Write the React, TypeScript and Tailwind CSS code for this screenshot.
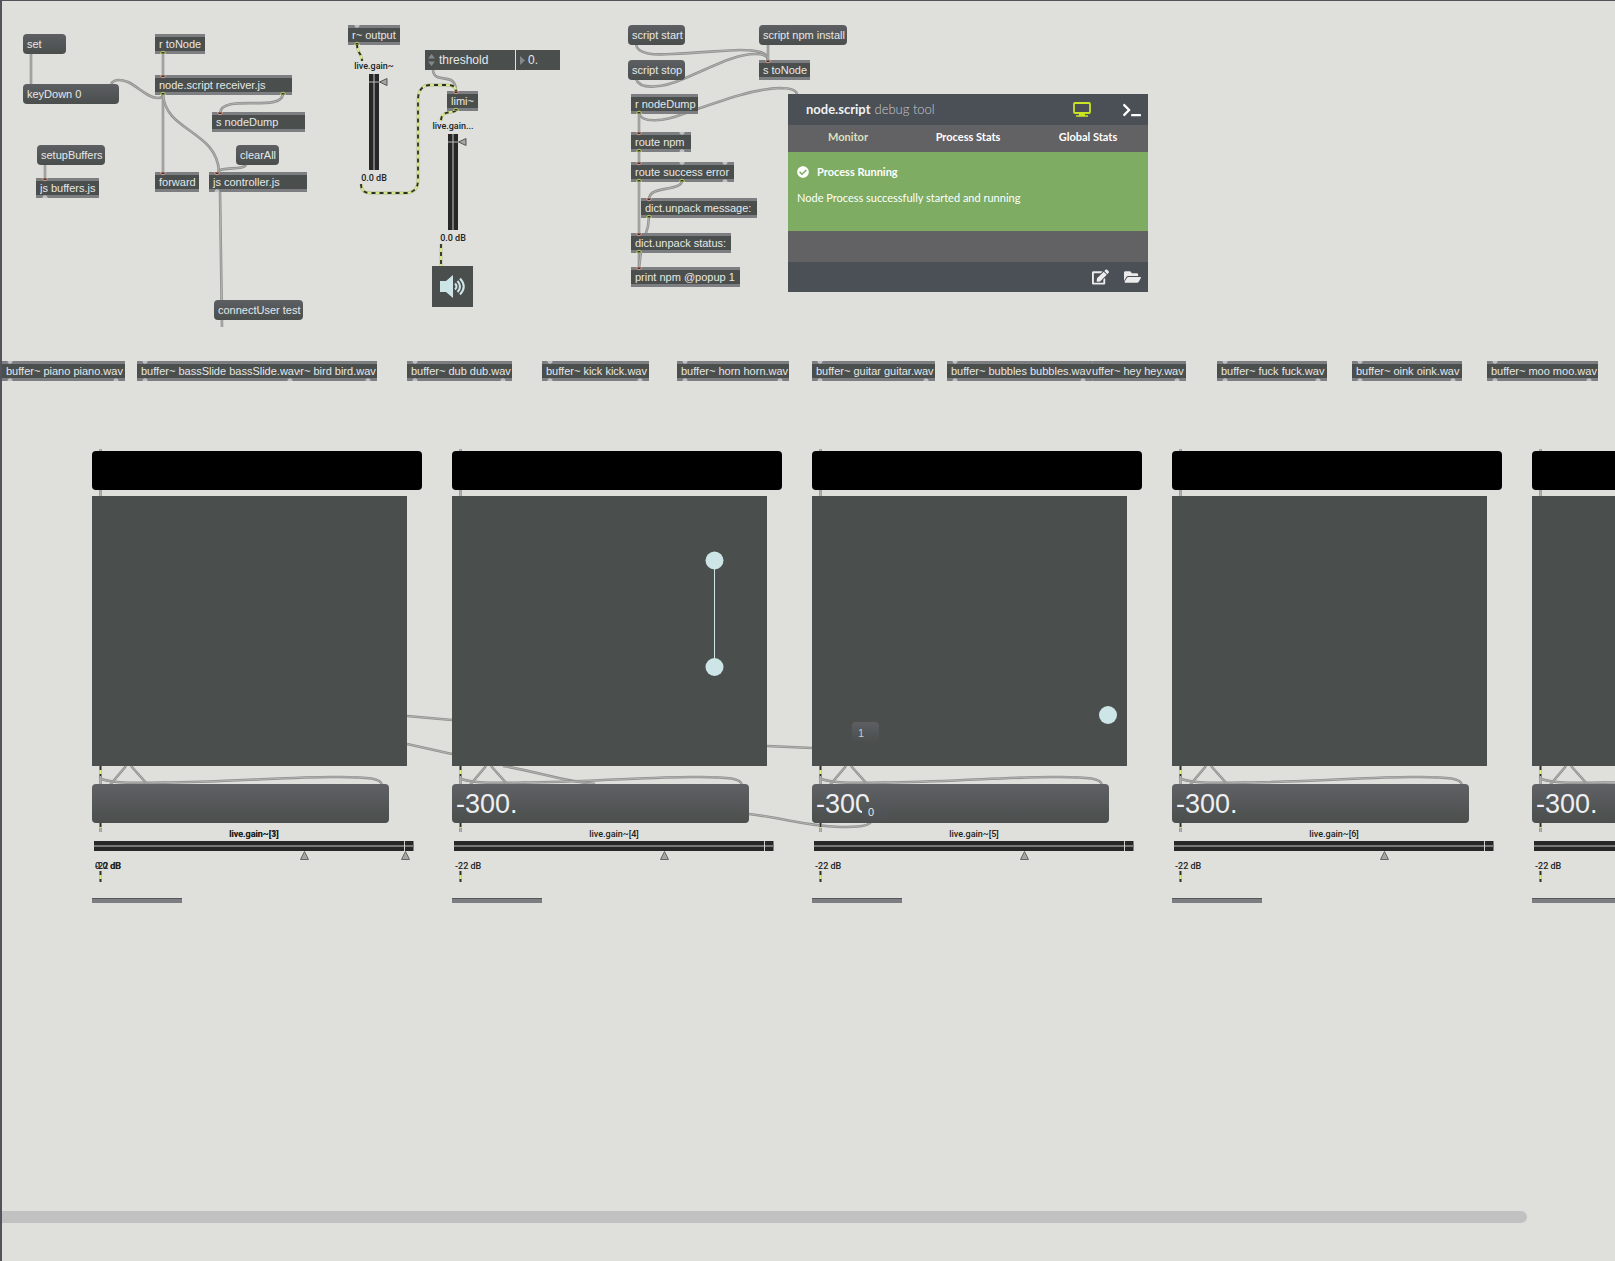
import { FaCheckCircle, FaEdit, FaFolderOpen, FaTerminal } from "react-icons/fa";

type PortKind = "in" | "out" | "idle";

interface Box {
    text: string;
    x: number;
    y: number;
    w: number;
    inlets?: [number, PortKind][];
    outlets?: [number, PortKind][];
    clip?: boolean;
}

const messages: Box[] = [
    { text: "set", x: 23, y: 34, w: 43 },
    { text: "keyDown 0", x: 23, y: 84, w: 96 },
    { text: "setupBuffers", x: 37, y: 145, w: 68 },
    { text: "clearAll", x: 236, y: 145, w: 43 },
    { text: "connectUser test", x: 214, y: 300, w: 89 },
    { text: "script start", x: 628, y: 25, w: 57 },
    { text: "script stop", x: 628, y: 60, w: 57 },
    { text: "script npm install", x: 759, y: 25, w: 88 },
];

const objects: Box[] = [
    { text: "r toNode", x: 155, y: 34, w: 50, outlets: [[8, "out"]] },
    { text: "node.script receiver.js", x: 155, y: 75, w: 137, inlets: [[8, "in"]], outlets: [[8, "out"], [128, "out"]] },
    { text: "s nodeDump", x: 212, y: 112, w: 93, inlets: [[8, "in"]] },
    { text: "js buffers.js", x: 36, y: 178, w: 63, inlets: [[9, "in"]], outlets: [[9, "idle"]], clip: true },
    { text: "forward", x: 155, y: 172, w: 44, inlets: [[8, "in"]] },
    { text: "js controller.js", x: 209, y: 172, w: 98, inlets: [[8, "in"]], outlets: [[8, "idle"]] },
    { text: "r~ output", x: 348, y: 25, w: 52, inlets: [[9, "idle"]], outlets: [[9, "out"]] },
    { text: "limi~", x: 447, y: 91, w: 31, inlets: [[9, "in"]], outlets: [[9, "out"]] },
    { text: "s toNode", x: 759, y: 60, w: 51, inlets: [[9, "in"]] },
    { text: "r nodeDump", x: 631, y: 94, w: 67, outlets: [[8, "out"]] },
    { text: "route npm", x: 631, y: 132, w: 60, inlets: [[8, "in"], [51, "idle"]], outlets: [[8, "out"], [51, "idle"]] },
    { text: "route success error", x: 631, y: 162, w: 103, inlets: [[8, "in"], [51, "idle"], [94, "idle"]], outlets: [[8, "out"], [51, "out"], [94, "idle"]] },
    { text: "dict.unpack message:", x: 641, y: 198, w: 116, inlets: [[8, "in"]], outlets: [[8, "out"]] },
    { text: "dict.unpack status:", x: 631, y: 233, w: 100, inlets: [[8, "in"]], outlets: [[8, "out"]], clip: true },
    { text: "print npm @popup 1", x: 631, y: 267, w: 109, inlets: [[8, "in"]] },
];

const cords = [
    "M31 54V84",
    "M111 84C114 79 120 79 128 82C140 88 148 98 158 98C162 98 163 96 163 94",
    "M163 53V76",
    "M163 94V172",
    "M163 94C165 132 217 130 219 172",
    "M283 94C281 113 222 93 220 113",
    "M246 164C246 171 220 166 218 172",
    "M45 164V179",
    "M220 191L222 327",
    "M433 69C433 86 456 70 456 91",
    "M636 44C637 55 655 55 672 54C700 53 725 50 740 50C757 50 768 52 768 60",
    "M636 79C640 91 665 87 683 79C710 68 735 54 755 54C764 54 768 56 768 60",
    "M768 44V60",
    "M639 113C642 124 665 121 683 114C715 103 750 89 780 88C790 88 796 90 797 94",
    "M639 113V133",
    "M639 151V163",
    "M639 181V234",
    "M682 181C680 192 650 185 649 199",
    "M649 217L648 226L646 233",
    "M639 252V268",
    "M641 252L639 267",
];

const signals = [
    "M357 44C357 54 362 53 362 61",
    "M361 184C361 190 364 193 370 193H405C414 193 418 188 418 180V100C418 90 423 85 430 85H446C452 85 456 86 456 91",
    "M456 110C454 114 441 109 441 121",
    "M441 244V266",
];

const buffers = [
    { text: "buffer~ piano piano.wav", w: 123 },
    { text: "buffer~ bassSlide bassSlide.wav", w: 162, front: true },
    { text: "buffer~ bird bird.wav", w: 105 },
    { text: "buffer~ dub dub.wav", w: 105 },
    { text: "buffer~ kick kick.wav", w: 107 },
    { text: "buffer~ horn horn.wav", w: 112 },
    { text: "buffer~ guitar guitar.wav", w: 123 },
    { text: "buffer~ bubbles bubbles.wav", w: 145, front: true },
    { text: "buffer~ hey hey.wav", w: 104 },
    { text: "buffer~ fuck fuck.wav", w: 110 },
    { text: "buffer~ oink oink.wav", w: 110 },
    { text: "buffer~ moo moo.wav", w: 111 },
];

interface Gain {
    name: string;
    value: string;
    x: number;
}

interface ChannelData {
    gains: Gain[];
    level?: string;
    nodes?: [number, number][];
}

const channels: ChannelData[] = [
    { gains: [{ name: "live.gain~[3]", value: "-22 dB", x: 212 }, { name: "live.gain~[1]", value: "0.0 dB", x: 313 }] },
    { gains: [{ name: "live.gain~[4]", value: "-22 dB", x: 212 }], level: "-300.", nodes: [[262.5, 64.5], [262.5, 171]] },
    { gains: [{ name: "live.gain~[5]", value: "-22 dB", x: 212 }], level: "-300.", nodes: [[296, 219]] },
    { gains: [{ name: "live.gain~[6]", value: "-22 dB", x: 212 }], level: "-300." },
    { gains: [{ name: "live.gain~[7]", value: "-22 dB", x: 212 }], level: "-300." },
];

function Cord({ d }: { d: string }) {
    return (
        <g fill="none">
            <path d={d} stroke="#8f908f" strokeWidth="2.6" />
            <path d={d} stroke="#b3b4b1" strokeWidth="1" />
        </g>
    );
}

function Signal({ d }: { d: string }) {
    return (
        <g fill="none">
            <path d={d} stroke="#b2ba90" strokeWidth="2.8" />
            <path d={d} stroke="#dcf582" strokeWidth="1.6" />
            <path d={d} stroke="#2c2f22" strokeWidth="1.8" strokeDasharray="4 4" />
        </g>
    );
}

function Port({ x, kind, bottom }: { x: number; kind: PortKind; bottom?: boolean }) {
    const fill = kind === "idle" ? "#bfc1c4" : "#33352f";
    const ring = kind === "idle" ? "none" : kind === "in" ? "#dc9a8c" : "#bccf62";

    return (
        <svg
            viewBox="0 0 8 4"
            className={bottom ? "absolute bottom-0 h-1 w-2" : "absolute top-0 h-1 w-2 rotate-180"}
            style={{ left: x - 4 }}
        >
            <path d="M1.500 4a2.500 2.800 0 0 1 5 0z" fill={fill} stroke={ring} strokeWidth="1" />
        </svg>
    );
}

function ObjectBox({ text, w, inlets = [], outlets = [], clip }: Omit<Box, "x" | "y">) {
    return (
        <div
            className="relative h-5 border-y-3 border-[#7c7e81] bg-[#4a4e4c] bg-clip-padding pl-1 text-[11px] text-[#e6e8e8]"
            style={{ width: w }}
        >
            <div className={clip ? "h-[13px] overflow-hidden leading-[15px] whitespace-nowrap" : "leading-[14px] whitespace-nowrap"}>
                {text}
            </div>
            <div className="absolute inset-x-0 -inset-y-[3px]">
                {inlets.map(([x, kind]) => <Port key={x} x={x} kind={kind} />)}
                {outlets.map(([x, kind]) => <Port key={x} x={x} kind={kind} bottom />)}
            </div>
        </div>
    );
}

function VerticalGain({ label }: { label: string }) {
    return (
        <div className="flex w-12 flex-col items-center font-[Roboto,sans-serif] text-[9px] leading-[14px] font-medium text-[#222]">
            <span className="whitespace-nowrap">{label}</span>
            <div className="relative my-px h-24 w-[10px]">
                <svg viewBox="0 0 20 96" className="h-24 w-5">
                    <path d="M0 0H10V96H0z" fill="#272727" />
                    <path d="M4 0H6V96H4z" fill="#777" />
                    <path d="M0 8H10" stroke="#bbb" />
                    <path d="M10.500 8L18 4.500V11.500z" fill="#a5a6a4" stroke="#555" />
                </svg>
                <input type="range" aria-label={label} defaultValue="80" className="absolute inset-0 h-full w-full opacity-0" />
            </div>
            <span>0.0 dB</span>
        </div>
    );
}

function DebugTool() {
    return (
        <section className="w-[360px] bg-[#4b4f56] font-[Lato,sans-serif] text-white">
            <header className="flex h-[31px] items-center pr-[7px] pl-[18px]">
                <h2 className="text-[13px] text-[#c9cbce]">
                    <b className="text-[#f0f1f2]">node.script</b>
                    <span className="ml-1 font-light">debug tool</span>
                </h2>
                <button aria-label="Monitor view" className="ml-auto">
                    <svg viewBox="0 0 18 15" className="h-[15px] w-[18px]" fill="none" stroke="#c9e523">
                        <rect x="1" y="1" width="16" height="10" rx="1" strokeWidth="1.8" />
                        <path d="M6 12.500H12M3 14H15" strokeWidth="1.4" />
                    </svg>
                </button>
                <button aria-label="Console" className="ml-8">
                    <FaTerminal className="h-[18px] w-[18px]" />
                </button>
            </header>
            <nav className="grid h-[27px] grid-cols-3 bg-[#626163] pb-[3px] text-[11px] font-bold">
                <button className="text-[#dde0bd]">Monitor</button>
                <button>Process Stats</button>
                <button>Global Stats</button>
            </nav>
            <div className="h-[79px] bg-[#7dac62] px-[9px] pt-3 text-[11px] leading-4">
                <p className="flex items-center gap-2 font-bold">
                    <FaCheckCircle className="h-3 w-3" />
                    Process Running
                </p>
                <p className="mt-[10px]">Node Process successfully started and running</p>
            </div>
            <div className="h-[31px] bg-[#626163]" />
            <footer className="flex h-[30px] items-center justify-end gap-[15px] pr-[7px] text-[#ececec]">
                <button aria-label="Edit script">
                    <FaEdit className="h-4 w-[17px]" />
                </button>
                <button aria-label="Open folder">
                    <FaFolderOpen className="h-4 w-[17px]" />
                </button>
            </footer>
        </section>
    );
}

function Channel({ gains, level, nodes }: ChannelData) {
    return (
        <div className="relative flex w-[330px] shrink-0 flex-col items-start">
            <svg viewBox="0 -3 330 440" className="pointer-events-none absolute -top-[3px] left-0 h-[440px] w-[330px]">
                <Cord d="M8.500 -2V46" />
                <Signal d="M8.500 315V327" />
                <Cord d="M8.500 325V334" />
                <Cord d="M9 328C25 333 50 332 80 331.500C150 330 200 326 240 326C280 325.500 289 328 290 334" />
                <Cord d="M34 315L18 334" />
                <Cord d="M39 315L56 334" />
                <Signal d="M8.500 372V378" />
                <Cord d="M8.500 377V381" />
                <Signal d="M8.500 420V431" />
            </svg>
            <button aria-label="Channel message" className="relative h-[39px] w-full rounded bg-black" />
            <svg viewBox="0 0 315 270" className="relative mt-1.5 h-[270px] w-[315px] bg-[#4a4e4c]">
                {nodes && (
                    <polyline points={nodes.map((n) => n.join(",")).join(" ")} fill="none" stroke="#cee5e8" />
                )}
                {nodes?.map(([cx, cy]) => <circle key={cy} cx={cx} cy={cy} r="9" fill="#cee5e8" />)}
            </svg>
            <button
                aria-label={level ? undefined : "Level"}
                className="relative mt-[18px] h-[39px] w-[297px] rounded bg-linear-to-b from-[#606165] to-[#4a4e4c] pl-1 text-left text-[27px] leading-[40px] text-[#edeff1]"
            >
                {level}
            </button>
            <div className="mt-1 grid w-[324px] justify-items-center font-[Roboto,sans-serif] text-[9px] leading-[14px] font-medium text-[#222]">
                {gains.map((g) => (
                    <span key={g.name} className="col-start-1 row-start-1">{g.name}</span>
                ))}
            </div>
            <div className="relative h-5 w-[324px]">
                <svg viewBox="0 0 324 20" className="h-5 w-[324px]">
                    <path d="M2 0H321.500V10H2z" fill="#272727" />
                    <path d="M2 5H321.500" stroke="#777" strokeWidth="2" />
                    <path d="M312.500 0V10" stroke="#d0d0d0" />
                    {gains.map((g) => (
                        <path key={g.name} d={`M${g.x + 0.5} 10.500L${g.x + 4.5} 18.500H${g.x - 3.5}z`} fill="#a5a6a4" stroke="#666" />
                    ))}
                </svg>
                {gains.map((g) => (
                    <input key={g.name} type="range" aria-label={g.name} defaultValue="66" className="absolute inset-0 w-full opacity-0" />
                ))}
            </div>
            <div className="grid pl-[3px] font-[Roboto,sans-serif] text-[9px] leading-[10px] font-medium text-[#222]">
                {gains.map((g) => (
                    <span key={g.name} className="col-start-1 row-start-1">{g.value}</span>
                ))}
            </div>
            <div className="mt-[27px] h-[5px] w-[90px] border-t border-[#55585a] bg-[#7c7e81]" />
        </div>
    );
}

export default function App() {
    return (
        <main className="relative flex min-h-screen flex-col overflow-hidden bg-[#dfe0dc] font-['Liberation_Sans',Arial,sans-serif] shadow-[inset_2px_1px_0_#53535b]">
            {/* Control patch */}
            <section className="relative h-[361px]">
                <svg className="absolute inset-0 h-full w-full">
                    {cords.map((d) => <Cord key={d} d={d} />)}
                    {signals.map((d) => <Signal key={d} d={d} />)}
                </svg>
                {messages.map((m) => (
                    <button
                        key={m.text}
                        className="absolute h-5 rounded bg-linear-to-b from-[#5d5f63] to-[#4a4e4c] pl-1 text-left text-[11px] leading-5 whitespace-nowrap text-[#e6e8e8]"
                        style={{ left: m.x, top: m.y, width: m.w }}
                    >
                        {m.text}
                    </button>
                ))}
                {objects.map(({ x, y, ...box }) => (
                    <div key={box.text} className="absolute" style={{ left: x, top: y }}>
                        <ObjectBox {...box} />
                    </div>
                ))}
                <div className="absolute top-[59px] left-[350px]">
                    <VerticalGain label="live.gain~" />
                </div>
                <div className="absolute top-[119px] left-[429px]">
                    <VerticalGain label="live.gain..." />
                </div>
                <div className="absolute top-[50px] left-[425px] flex h-5 gap-px text-[12px] leading-5 text-[#e6e8e8]">
                    <label htmlFor="threshold" className="flex w-[90px] items-center gap-1 bg-[#4a4e4c] pl-[3px]">
                        <svg viewBox="0 0 7 12" className="h-3 w-[7px]" fill="#85888a">
                            <path d="M3.500 0L7 4.500H0zM0 7.500H7L3.500 12z" />
                        </svg>
                        threshold
                    </label>
                    <div className="flex w-11 items-center gap-[3px] bg-[#4a4e4c] pl-1">
                        <svg viewBox="0 0 5 9" className="h-[9px] w-[5px] shrink-0" fill="#85888a">
                            <path d="M0 0L5 4.500L0 9z" />
                        </svg>
                        <input id="threshold" defaultValue="0." className="w-6 bg-transparent" />
                    </div>
                </div>
                <button aria-label="Audio on" className="absolute top-[266px] left-[432px] h-[41px] w-[41px] bg-[#4a4e4c] p-2">
                    <svg viewBox="0 0 25 25" className="h-[25px] w-[25px]" fill="none" stroke="#cee5e8" strokeWidth="2">
                        <path d="M0 7H6L13 1V24L6 18H0z" fill="#cee5e8" stroke="none" />
                        <path d="M15 9.500Q18 12.500 15 15.500M17.500 7Q22.500 12.500 17.500 18M20 4.500Q27.500 12.500 20 20.500" />
                    </svg>
                </button>
                <div className="absolute top-[94px] left-[788px]">
                    <DebugTool />
                </div>
            </section>

            {/* Sample buffers */}
            <section className="flex pl-[2px]">
                {buffers.map((b) => (
                    <div key={b.text} className={b.front ? "relative z-10 w-[135px] shrink-0" : "w-[135px] shrink-0"}>
                        <ObjectBox text={b.text} w={b.w} inlets={[[8, "idle"]]} outlets={[[8, "idle"], [b.w - 9, "idle"]]} clip />
                    </div>
                ))}
            </section>

            {/* Voices */}
            <section className="relative mt-[70px] flex gap-[30px] pl-[92px]">
                <svg className="absolute inset-0 h-full w-full">
                    <Cord d="M407 265L452 269" />
                    <Cord d="M407 293L452 303" />
                    <Cord d="M767 295L812 297" />
                    <Cord d="M503 315C540 321 560 330 595 333" />
                    <Cord d="M749 363C790 368 800 374 840 376C860 376 868 375 871 371" />
                </svg>
                {channels.map((c) => <Channel key={c.gains[0].name} {...c} />)}
                <button className="absolute top-[271px] left-[852px] h-5 w-[27px] rounded bg-linear-to-b from-[#5d5f63] to-[#4a4e4c] pl-1.5 text-left text-[11px] leading-[22px] text-[#c5c7c8]">
                    1
                </button>
                <button className="absolute top-[351px] left-[862px] h-5 w-[27px] rounded bg-linear-to-b from-[#55585a] to-[#4d5051] pl-1.5 text-left text-[11px] leading-5 text-[#e6e8e8]">
                    0
                </button>
            </section>

            <div className="mt-auto mb-[38px] ml-[2px] h-3 w-[94.4%] rounded-r-full bg-[#c1c1c1]" />
        </main>
    );
}
